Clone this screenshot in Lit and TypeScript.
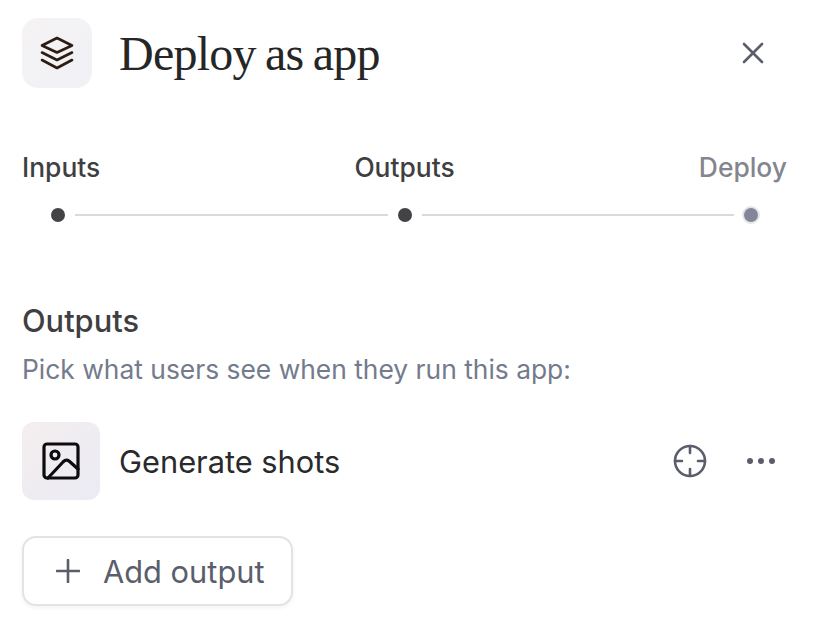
import {html, css, LitElement} from 'lit';
import {customElement} from 'lit/decorators.js';

@customElement('app-root')
export class AppRoot extends LitElement {
  static styles = css`
    :host {
      display: block;
      width: 814px;
      height: 626px;
      box-sizing: border-box;
      padding: 18px 22px 0 22px;
      background: #fff;
      font-family: Inter, "Noto Sans", sans-serif;
      overflow: hidden;
    }
    .header {
      display: flex;
      align-items: center;
      gap: 27px;
      height: 70px;
    }
    .logo {
      width: 70px;
      height: 70px;
      border-radius: 16px;
      background: linear-gradient(135deg, #f5f3f3, #f0f0f6);
      display: flex;
      align-items: center;
      justify-content: center;
    }
    .title {
      flex: 1;
      font-family: "Liberation Serif", serif;
      font-size: 48px;
      font-weight: 400;
      letter-spacing: -0.75px;
      word-spacing: -2px;
      color: #262626;
      margin: 0;
    }
    .close {
      display: flex;
      margin-right: 28px;
    }
    .labels {
      display: grid;
      grid-template-columns: 1fr auto 1fr;
      margin-top: 63px;
      padding-right: 5px;
      font-size: 26.4px;
      line-height: 32px;
      font-weight: 500;
      color: #3f3f42;
    }
    .labels .todo {
      color: #85858f;
      justify-self: end;
    }
    .track {
      display: flex;
      align-items: center;
      gap: 10px;
      margin-top: 24px;
      padding: 0 34px 0 29px;
      height: 16px;
    }
    .dot {
      width: 14px;
      height: 14px;
      border-radius: 50%;
      background: #434346;
      flex: none;
    }
    .dot.todo {
      background: #85859a;
      box-shadow: 0 0 0 2px #e6e6ea;
    }
    .line {
      flex: 1;
      height: 2px;
      background: #d9d9df;
    }
    h2 {
      margin: 80px 0 0 0;
      font-size: 30.8px;
      line-height: 36px;
      font-weight: 500;
      color: #3f3f42;
    }
    .hint {
      margin: 14px 0 0 0;
      font-size: 26.4px;
      line-height: 32px;
      color: #747b8c;
    }
    .row {
      display: flex;
      align-items: center;
      margin-top: 37px;
      height: 78px;
    }
    .thumb {
      width: 78px;
      height: 78px;
      border-radius: 12px;
      background: linear-gradient(135deg, #f4eeee, #ebebf4);
      display: flex;
      align-items: center;
      justify-content: center;
    }
    .name {
      flex: 1;
      margin-left: 19px;
      font-size: 30.8px;
      color: #2a2a2c;
    }
    .actions {
      display: flex;
      align-items: center;
      gap: 40px;
      margin-right: 17px;
    }
    .actions svg {
      display: block;
    }
    button {
      display: inline-flex;
      align-items: center;
      gap: 23px;
      margin-top: 36px;
      height: 70px;
      width: 271px;
      box-sizing: border-box;
      padding: 0 0 0 32px;
      background: #fff;
      border: 2px solid #e3e3e6;
      border-radius: 14px;
      box-shadow: 0 2px 4px rgba(0, 0, 0, 0.05);
      font-family: inherit;
      font-size: 30.8px;
      color: #5a5e6b;
    }
  `;

  render() {
    return html`
      <div class="header">
        <div class="logo">
          <svg width="34" height="34" viewBox="0 0 34 34" fill="none" stroke="#2c1c12" stroke-width="2.6" stroke-linejoin="round" stroke-linecap="round">
            <path d="M17 2 L32 9.5 L17 16.5 L2 9.5 Z" />
            <path d="M2 16.5 L17 24 L32 16.5" />
            <path d="M2 24 L17 32 L32 24" />
          </svg>
        </div>
        <h1 class="title">Deploy as app</h1>
        <div class="close">
          <svg width="22" height="22" viewBox="0 0 22 22" fill="none" stroke="#5a5e6b" stroke-width="2.6" stroke-linecap="round">
            <path d="M2 2 L20 20 M20 2 L2 20" />
          </svg>
        </div>
      </div>

      <div class="labels">
        <span>Inputs</span>
        <span>Outputs</span>
        <span class="todo">Deploy</span>
      </div>
      <div class="track">
        <span class="dot"></span>
        <span class="line"></span>
        <span class="dot"></span>
        <span class="line"></span>
        <span class="dot todo"></span>
      </div>

      <h2>Outputs</h2>
      <p class="hint">Pick what users see when they run this app:</p>

      <div class="row">
        <div class="thumb">
          <svg width="38" height="38" viewBox="0 0 38 38" fill="none" stroke="#0c0c10" stroke-width="3.2" stroke-linejoin="round" stroke-linecap="round">
            <rect x="2" y="2" width="34" height="34" rx="3" />
            <circle cx="13" cy="13" r="4" />
            <path d="M6 36 L21 20 Q24 17 27 19 L36 27" />
          </svg>
        </div>
        <div class="name">Generate shots</div>
        <div class="actions">
          <svg width="34" height="34" viewBox="0 0 34 34" fill="none" stroke="#5a5e6b" stroke-width="2.6" stroke-linecap="round">
            <circle cx="17" cy="17" r="15" />
            <path d="M17 2 V9 M17 25 V32 M2 17 H9 M25 17 H32" />
          </svg>
          <svg width="28" height="6" viewBox="0 0 28 6" fill="#5a5e6b">
            <circle cx="3" cy="3" r="3" />
            <circle cx="14" cy="3" r="3" />
            <circle cx="25" cy="3" r="3" />
          </svg>
        </div>
      </div>

      <button>
        <svg width="24" height="24" viewBox="0 0 24 24" fill="none" stroke="#5a5e6b" stroke-width="2.6" stroke-linecap="round">
          <path d="M12 1 V23 M1 12 H23" />
        </svg>
        Add output
      </button>
    `;
  }
}
